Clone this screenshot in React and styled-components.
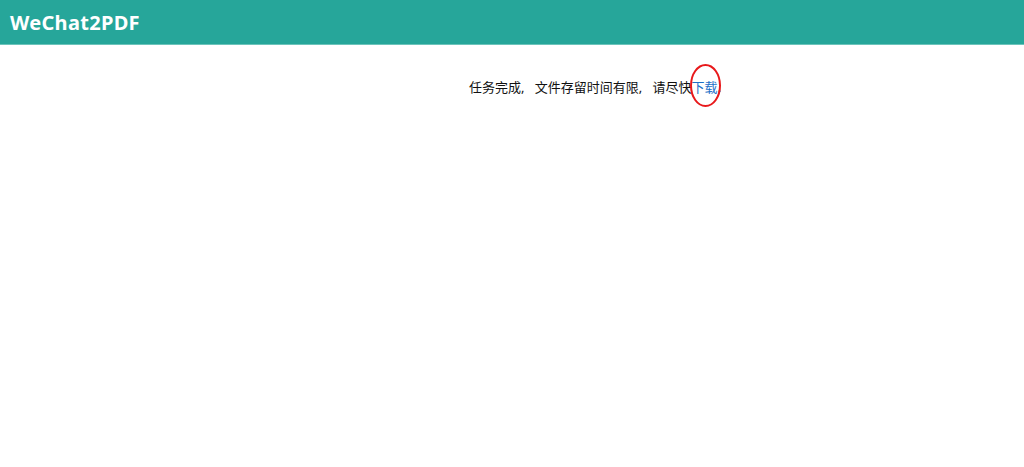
import styled, { createGlobalStyle } from "styled-components";

const GlobalStyle = createGlobalStyle`
  html, body {
    margin: 0;
    padding: 0;
    background: #fff;
    font-family: "Noto Sans", "Noto Sans CJK SC", sans-serif;
  }
`

const Page = styled.div`
  min-height: 100vh;
  background: #fff;
`

const Header = styled.header`
  height: 44px;
  background-color: #26a69a;
  border-bottom: 1px solid #6cc4bb;
  display: flex;
  align-items: center;
  padding: 0 10px;
`

const Brand = styled.h1`
  margin: 0;
  color: #fff;
  font-family: "Noto Sans", sans-serif;
  font-size: 20px;
  font-weight: 700;
  letter-spacing: 0.3px;
`

const Main = styled.main`
  padding: 32px 0 40px 166px;
  text-align: center;
`

const Message = styled.p`
  margin: 0;
  font-size: 13px;
  line-height: 20px;
  color: #111;
  word-spacing: 7px;
  font-family: "Noto Sans", "Noto Sans CJK SC", sans-serif;
`

const Mark = styled.span`
  position: relative;
  display: inline-block;
  line-height: 20px;
`

const DownloadLink = styled.a`
  color: #1e6fc7;
  text-decoration: none;
`

const Ring = styled.svg`
  position: absolute;
  left: -2px;
  top: -13px;
  z-index: 1;
  overflow: visible;
  pointer-events: none;
`

export default function App() {
  return (
    <Page>
      <GlobalStyle />
      <Header>
        <Brand>WeChat2PDF</Brand>
      </Header>
      <Main>
        <Message>
          任务完成, 文件存留时间有限, 请尽快
          <Mark>
            <DownloadLink href="#">下载</DownloadLink>.
            <Ring width="32" height="44" viewBox="0 0 32 44">
              <ellipse cx="15.5" cy="21.5" rx="14.5" ry="20.5" fill="none" stroke="#e8191b" strokeWidth="2" />
            </Ring>
          </Mark>
        </Message>
      </Main>
    </Page>
  );
}
